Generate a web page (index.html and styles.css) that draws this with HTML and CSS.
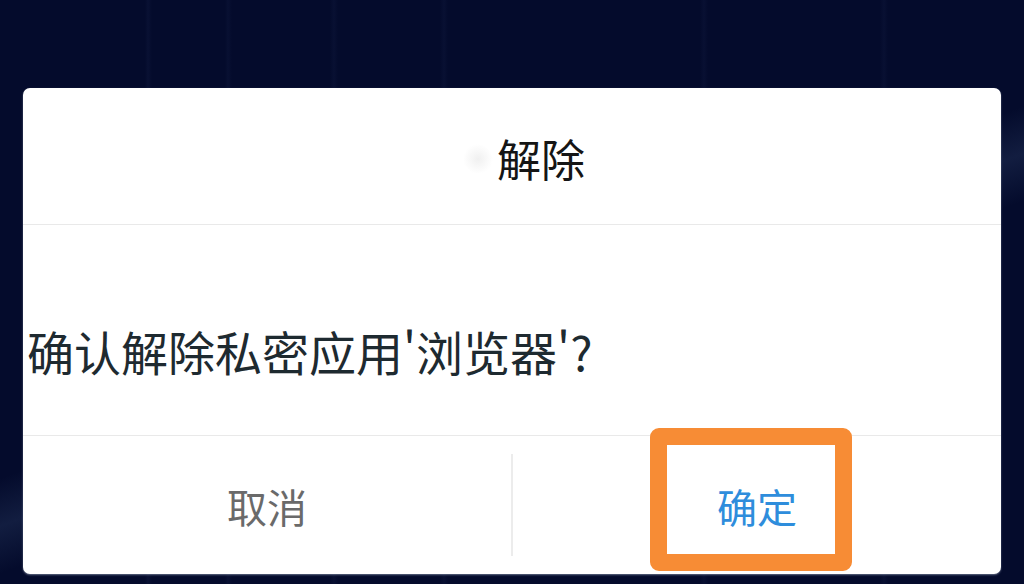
FILE: index.html
```html
<!DOCTYPE html>
<html lang="zh-CN">
<head>
<meta charset="utf-8">
<title>解除</title>
<link rel="stylesheet" href="styles.css">
</head>
<body>
<div class="screen">
  <div class="dialog">
    <div class="dialog-header">
      <span class="blur-mark"></span>
      <span class="title">解除</span>
    </div>
    <div class="dialog-body">
      <p class="message">确认解除私密应用'浏览器'?</p>
    </div>
    <div class="dialog-footer">
      <button class="btn btn-cancel">取消</button>
      <span class="vdivider"></span>
      <button class="btn btn-ok">确定</button>
      <span class="highlight"></span>
    </div>
  </div>
</div>
</body>
</html>
```

FILE: styles.css
```css
html, body {
  margin: 0;
  padding: 0;
}
body {
  width: 1024px;
  height: 584px;
  overflow: hidden;
  background-color: #040b2c;
  background-image:
    linear-gradient(160deg, transparent 50%, rgba(120,160,210,0.12) 55%, transparent 60%),
    linear-gradient(90deg, transparent 145px, rgba(90,110,170,0.06) 148px, transparent 152px, transparent 225px, rgba(90,110,170,0.05) 228px, transparent 232px, transparent 330px, rgba(90,110,170,0.05) 334px, transparent 338px, transparent 440px, rgba(90,110,170,0.05) 444px, transparent 448px, transparent 700px, rgba(90,110,170,0.05) 704px, transparent 708px, transparent 880px, rgba(90,110,170,0.05) 884px, transparent 888px);
  font-family: "Noto Sans CJK SC", "Noto Sans", sans-serif;
}
.screen {
  padding: 88px 0 0 23px;
}
.dialog {
  width: 978px;
  height: 486px;
  background: #ffffff;
  border-radius: 7px;
  box-shadow: 0 1px 2px rgba(160,170,190,0.6);
  display: flex;
  flex-direction: column;
  overflow: hidden;
}
.dialog-header {
  height: 137px;
  border-bottom: 1px solid #e9e9e9;
  display: flex;
  align-items: center;
  justify-content: center;
  padding-left: 58px;
  box-sizing: border-box;
  position: relative;
}
.blur-mark {
  position: absolute;
  left: 440px;
  top: 56px;
  width: 30px;
  height: 30px;
  background: radial-gradient(ellipse at center, rgba(225,225,225,0.5), rgba(255,255,255,0) 70%);
}
.title {
  font-size: 44px;
  line-height: 48px;
  color: #151515;
  margin-top: 4px;
}
.dialog-body {
  height: 211px;
  border-bottom: 1px solid #e9e9e9;
  box-sizing: border-box;
  padding: 102px 0 0 4px;
}
.message {
  margin: 0;
  font-size: 47px;
  line-height: 48px;
  color: #1e2a30;
  white-space: nowrap;
}
.dialog-footer {
  flex: 1;
  display: flex;
  align-items: center;
  position: relative;
}
.btn {
  flex: 1;
  height: 100%;
  border: 0;
  background: transparent;
  font-family: "Noto Sans CJK SC", "Noto Sans", sans-serif;
  font-size: 40px;
  padding: 0;
  padding-top: 2px;
}
.btn-cancel {
  color: #6a6a6a;
}
.btn-ok {
  color: #2e8ddc;
}
.vdivider {
  width: 2px;
  height: 102px;
  background: #ececec;
  align-self: center;
}
.highlight {
  position: absolute;
  left: 627px;
  top: -8px;
  width: 202px;
  height: 143px;
  box-sizing: border-box;
  border: 17px solid #f78c35;
  border-radius: 9px;
}
```
